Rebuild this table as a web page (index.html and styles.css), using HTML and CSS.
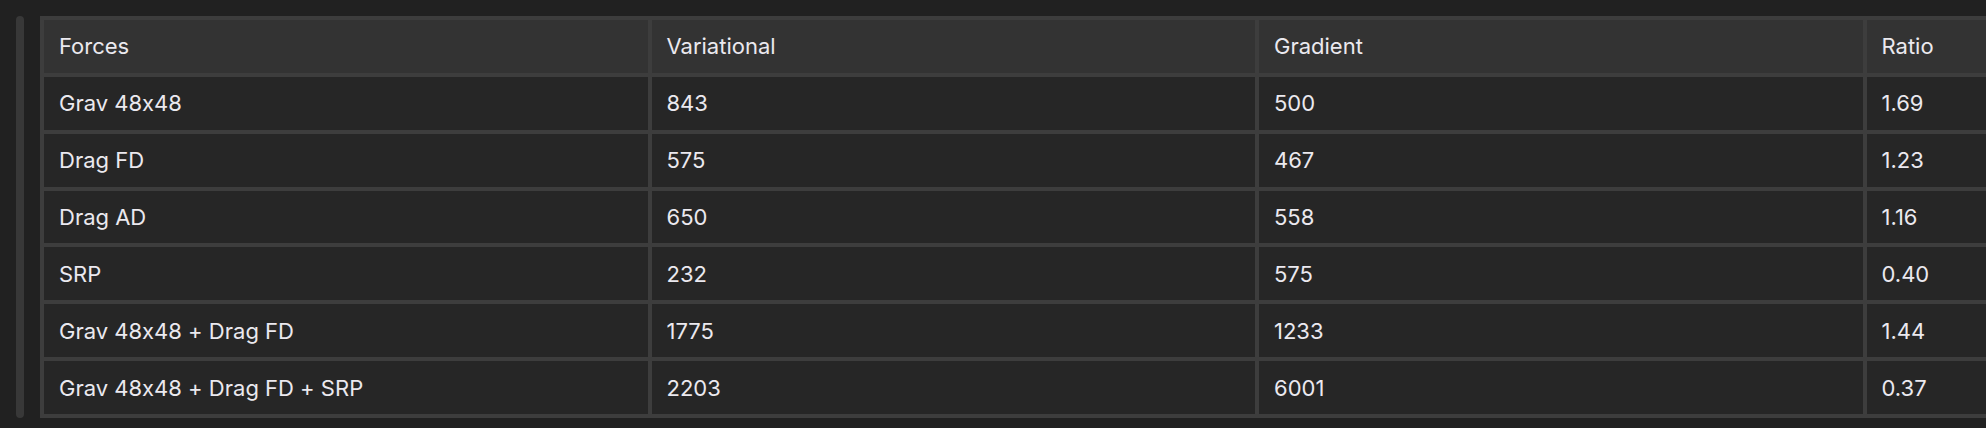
FILE: index.html
```html
<!DOCTYPE html>
<html>
<head>
<meta charset="utf-8">
<link rel="stylesheet" href="styles.css">
</head>
<body>
<div class="page">
  <div class="scrollbar"></div>
  <div class="table-wrap">
    <table class="data">
      <thead>
        <tr><th>Forces</th><th>Variational</th><th>Gradient</th><th>Ratio</th></tr>
      </thead>
      <tbody>
        <tr><td>Grav 48x48</td><td>843</td><td>500</td><td>1.69</td></tr>
        <tr><td>Drag FD</td><td>575</td><td>467</td><td>1.23</td></tr>
        <tr><td>Drag AD</td><td>650</td><td>558</td><td>1.16</td></tr>
        <tr><td>SRP</td><td>232</td><td>575</td><td>0.40</td></tr>
        <tr><td>Grav 48x48 + Drag FD</td><td>1775</td><td>1233</td><td>1.44</td></tr>
        <tr><td>Grav 48x48 + Drag FD + SRP</td><td>2203</td><td>6001</td><td>0.37</td></tr>
      </tbody>
    </table>
  </div>
</div>
</body>
</html>
```

FILE: styles.css
```css
html, body {
  margin: 0;
  padding: 0;
  background: #212121;
  overflow: hidden;
}
.page {
  display: flex;
  align-items: flex-start;
  gap: 16px;
  padding: 16px 0 0 16px;
  width: 1970px;
  height: 412px;
  overflow: hidden;
}
.scrollbar {
  flex: 0 0 8px;
  height: 402px;
  background: #383838;
  border-radius: 4px;
}
.table-wrap {
  flex: 0 0 auto;
}
.data {
  border-collapse: separate;
  border-spacing: 4px;
  background: #3d3d3d;
  font-family: "Inter", "Noto Sans", sans-serif;
  font-feature-settings: "calt" 0;
  font-size: 22px;
  color: #ebe9ef;
  table-layout: fixed;
  width: 2434px;
}
.data th, .data td {
  width: 603.5px;
  height: 52.86px;
  padding: 0 0 0 15px;
  box-sizing: border-box;
  text-align: left;
  font-weight: 400;
  vertical-align: middle;
}
.data th {
  background: #333333;
}
.data td {
  background: #262626;
}
```
